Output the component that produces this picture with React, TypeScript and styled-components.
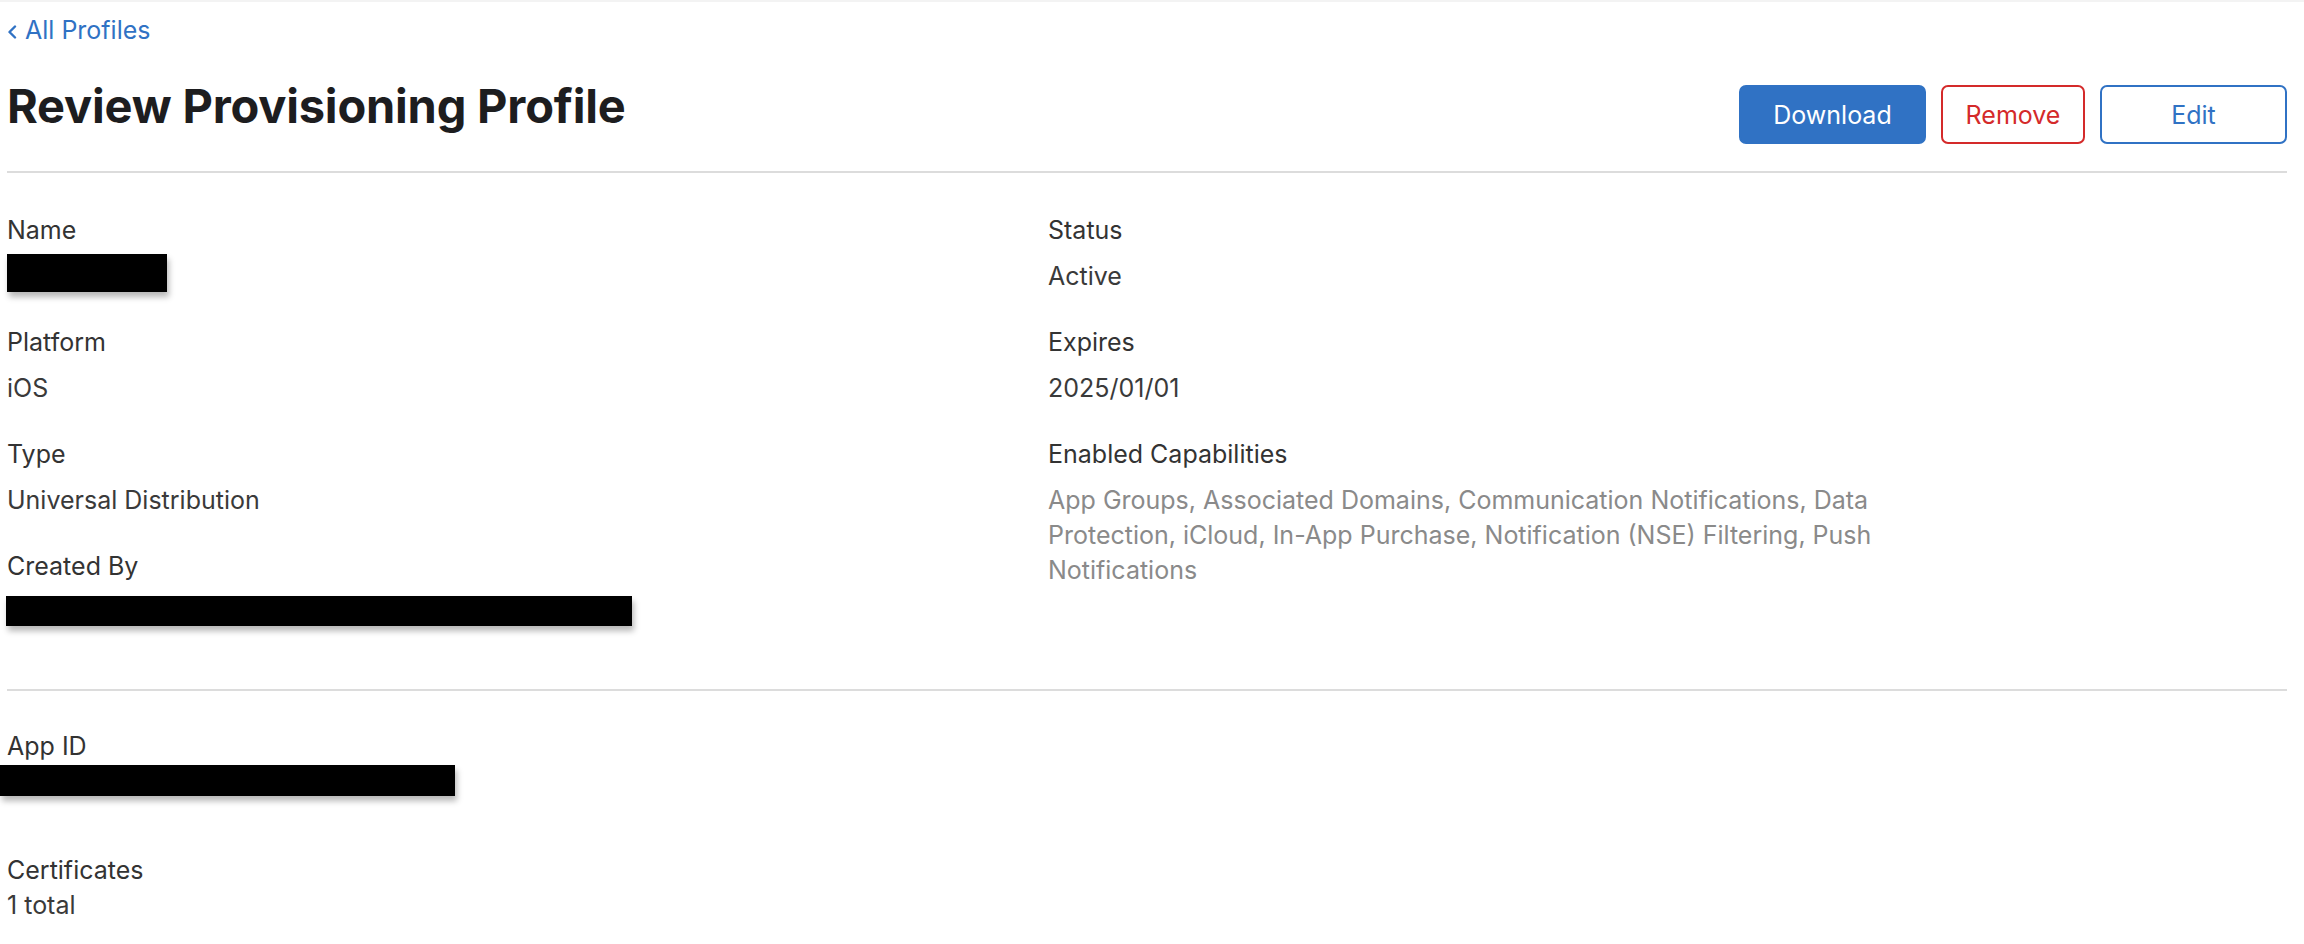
import styled, { createGlobalStyle } from 'styled-components'

const GlobalStyle = createGlobalStyle`
    html, body {
        margin: 0;
        padding: 0;
        background: #ffffff;
    }
    body {
        font-family: Inter, "Noto Sans", "Liberation Sans", sans-serif;
        font-size: 25px;
        line-height: 35px;
        color: #333333;
    }
`

const Page = styled.div`
    border-top: 2px solid #f3f3f3;
    padding: 0 17px 0 7px;
`

const BackLink = styled.a`
    display: inline-flex;
    align-items: center;
    gap: 8px;
    margin-top: 11px;
    color: #3072c4;
    text-decoration: none;
    font-size: 25px;
    line-height: 35px;
    svg {
        margin-top: 2px;
    }
`

const Header = styled.header`
    display: flex;
    justify-content: space-between;
    align-items: flex-start;
    padding: 30px 0 27px;
    border-bottom: 2px solid #dcdcdc;
`

const Title = styled.h1`
    margin: 0;
    font-size: 47px;
    line-height: 56px;
    font-weight: 700;
    letter-spacing: -0.2px;
    color: #1d1d1f;
`

const Actions = styled.div`
    display: flex;
    gap: 15px;
    margin-top: 7px;
`

const Button = styled.button<{ $variant: 'primary' | 'danger' | 'outline'; $width: number }>`
    width: ${p => p.$width}px;
    height: 59px;
    border-radius: 7px;
    font-family: inherit;
    font-size: 25px;
    cursor: pointer;
    border: 2px solid ${p => (p.$variant === 'danger' ? '#d42a2a' : '#3072c4')};
    background: ${p => (p.$variant === 'primary' ? '#3072c4' : '#ffffff')};
    color: ${p => (p.$variant === 'primary' ? '#ffffff' : p.$variant === 'danger' ? '#d42a2a' : '#3072c4')};
`

const Section = styled.section<{ $top: number; $bottom: number; $divider?: boolean }>`
    padding: ${p => p.$top}px 0 ${p => p.$bottom}px;
    border-bottom: ${p => (p.$divider ? '2px solid #dcdcdc' : 'none')};
`

const Columns = styled.div`
    display: grid;
    grid-template-columns: 1041px 1fr;
`

const Column = styled.div`
    display: flex;
    flex-direction: column;
`

const Field = styled.div<{ $gap: number; $after: number }>`
    display: flex;
    flex-direction: column;
    gap: ${p => p.$gap}px;
    margin-bottom: ${p => p.$after}px;
`

const Label = styled.div`
    color: #333333;
`

const Value = styled.div<{ $muted?: boolean }>`
    color: ${p => (p.$muted ? '#8a8a8a' : '#3a3a3a')};
    max-width: ${p => (p.$muted ? '860px' : 'none')};
`

const Redacted = styled.div<{ $w: number; $h: number; $shift: number; $left?: number }>`
    width: ${p => p.$w}px;
    height: ${p => p.$h}px;
    margin-top: ${p => p.$shift}px;
    margin-left: ${p => p.$left ?? 0}px;
    margin-bottom: ${p => 35 - p.$h - p.$shift}px;
    background: #000000;
    box-shadow: 2px 5px 6px rgba(0, 0, 0, 0.28);
`

const Chevron = () => (
    <svg width="10" height="14" viewBox="0 0 10 14">
        <polyline points="8,1.5 2.5,7 8,12.5" fill="none" stroke="#3072c4" strokeWidth="2.4" strokeLinecap="round" strokeLinejoin="round" />
    </svg>
)

function App() {
    return (
        <>
            <GlobalStyle />
            <Page>
                <BackLink href="#">
                    <Chevron />
                    All Profiles
                </BackLink>
                <Header>
                    <Title>Review Provisioning Profile</Title>
                    <Actions>
                        <Button $variant="primary" $width={187}>Download</Button>
                        <Button $variant="danger" $width={144}>Remove</Button>
                        <Button $variant="outline" $width={187}>Edit</Button>
                    </Actions>
                </Header>

                <Section $top={40} $bottom={28} $divider>
                    <Columns>
                        <Column>
                            <Field $gap={11} $after={31}>
                                <Label>Name</Label>
                                <Redacted $w={160} $h={38} $shift={-5} />
                            </Field>
                            <Field $gap={11} $after={31}>
                                <Label>Platform</Label>
                                <Value>iOS</Value>
                            </Field>
                            <Field $gap={11} $after={31}>
                                <Label>Type</Label>
                                <Value>Universal Distribution</Value>
                            </Field>
                            <Field $gap={11} $after={31}>
                                <Label>Created By</Label>
                                <Redacted $w={626} $h={30} $shift={1} $left={-1} />
                            </Field>
                        </Column>
                        <Column>
                            <Field $gap={11} $after={31}>
                                <Label>Status</Label>
                                <Value>Active</Value>
                            </Field>
                            <Field $gap={11} $after={31}>
                                <Label>Expires</Label>
                                <Value>2025/01/01</Value>
                            </Field>
                            <Field $gap={11} $after={31}>
                                <Label>Enabled Capabilities</Label>
                                <Value $muted>
                                    App Groups, Associated Domains, Communication Notifications, Data Protection, iCloud, In-App Purchase, Notification (NSE) Filtering, Push Notifications
                                </Value>
                            </Field>
                        </Column>
                    </Columns>
                </Section>

                <Section $top={38} $bottom={20}>
                    <Field $gap={0} $after={54}>
                        <Label>App ID</Label>
                        <Redacted $w={455} $h={31} $shift={1} $left={-7} />
                    </Field>
                    <Field $gap={0} $after={0}>
                        <Label>Certificates</Label>
                        <Value>1 total</Value>
                    </Field>
                </Section>
            </Page>
        </>
    )
}

export default App
